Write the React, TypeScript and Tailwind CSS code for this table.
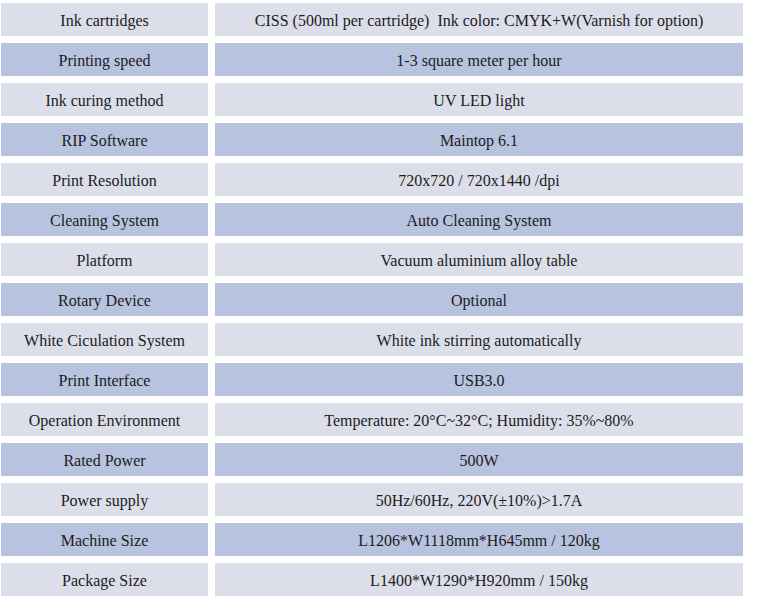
const rows: [string, string][] = [
  ['Ink cartridges', 'CISS (500ml per cartridge)  Ink color: CMYK+W(Varnish for option)'],
  ['Printing speed', '1-3 square meter per hour'],
  ['Ink curing method', 'UV LED light'],
  ['RIP Software', 'Maintop 6.1'],
  ['Print Resolution', '720x720 / 720x1440 /dpi'],
  ['Cleaning System', 'Auto Cleaning System'],
  ['Platform', 'Vacuum aluminium alloy table'],
  ['Rotary Device', 'Optional'],
  ['White Ciculation System', 'White ink stirring automatically'],
  ['Print Interface', 'USB3.0'],
  ['Operation Environment', 'Temperature: 20\u00b0C~32\u00b0C; Humidity: 35%~80%'],
  ['Rated Power', '500W'],
  ['Power supply', '50Hz/60Hz, 220V(\u00b110%)>1.7A'],
  ['Machine Size', 'L1206*W1118mm*H645mm / 120kg'],
  ['Package Size', 'L1400*W1290*H920mm / 150kg'],
]

export default function App() {
  return (
    <div
      className="w-[757px] h-[607px] bg-white pt-[3px] pl-[1px] text-[#1c1c1c]"
      style={{ fontFamily: '"Liberation Serif", "Times New Roman", serif' }}
    >
      <div className="flex flex-col gap-[7px] w-[742px]">
        {rows.map(([label, value], i) => {
          const bg = i % 2 === 0 ? 'bg-[#dcdfe9]' : 'bg-[#b8c3e0]'
          return (
            <div key={label} className="flex gap-[7px] h-[33px] text-[16px]">
              <div className={`w-[207px] pt-[2px] flex items-center justify-center ${bg}`}>{label}</div>
              <div className={`flex-1 pt-[2px] flex items-center justify-center whitespace-pre ${bg}`}>{value}</div>
            </div>
          )
        })}
      </div>
    </div>
  )
}
